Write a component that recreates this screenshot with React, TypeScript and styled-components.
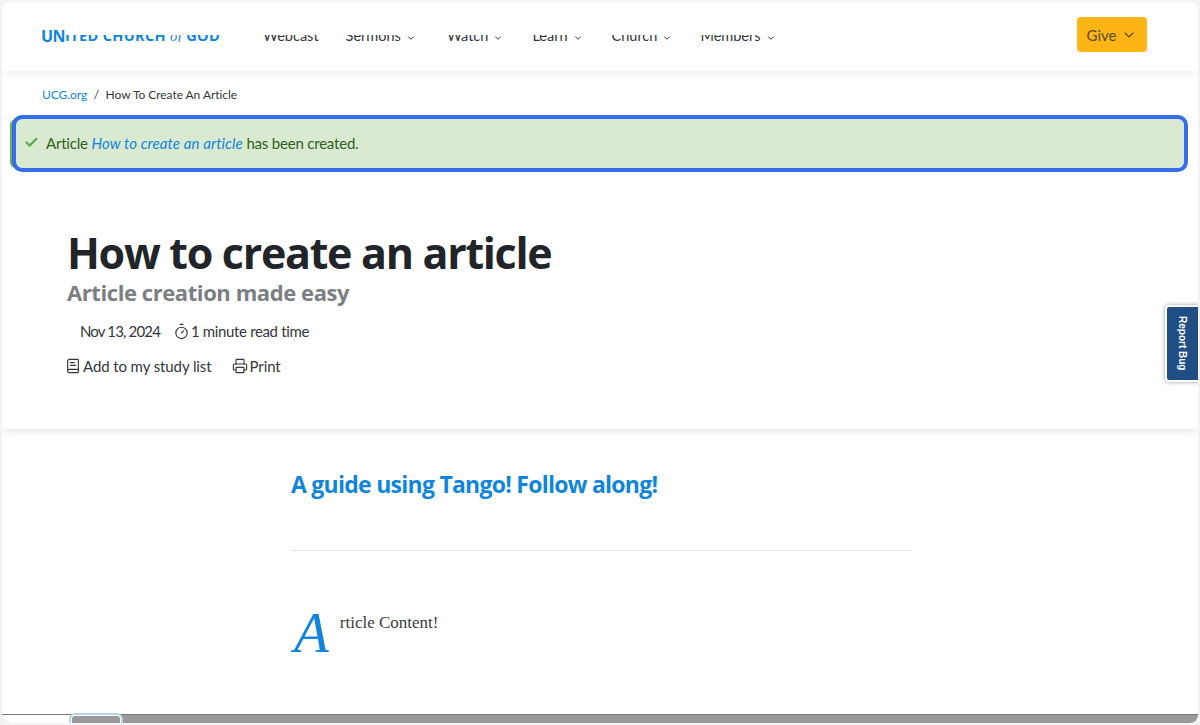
import React from 'react';
import styled, { createGlobalStyle } from 'styled-components';
import { Check, ChevronDown, Timer, BookText, Printer } from 'lucide-react';

const GlobalStyle = createGlobalStyle`
  html, body {
    margin: 0;
    padding: 0;
    height: 725px;
    overflow: hidden;
    background: #f2f2f7;
  }
  * { box-sizing: border-box; }
`;

const navItems = [
  { label: 'Webcast', gap: 27, arrow: false },
  { label: 'Sermons', gap: 31, arrow: true },
  { label: 'Watch', gap: 29, arrow: true },
  { label: 'Learn', gap: 29, arrow: true },
  { label: 'Church', gap: 28, arrow: true },
  { label: 'Members', gap: 0, arrow: true },
];

const App = () => {
  return (
    <>
      <GlobalStyle />
      <Frame>
        <Header>
          <Logo>
            <LogoHead>UN</LogoHead>
            <LogoClip>
              <LogoText>ITED CHURCH <em>of</em> GOD</LogoText>
            </LogoClip>
          </Logo>
          <Nav>
            {navItems.map((item) => (
              <NavItem key={item.label} $gap={item.gap}>
                <NavClip>
                  <NavText>{item.label}</NavText>
                </NavClip>
                {item.arrow && <NavArrow><ChevronDown size={10} strokeWidth={2.4} /></NavArrow>}
              </NavItem>
            ))}
          </Nav>
          <GiveButton>
            Give <ChevronDown size={16} strokeWidth={1.6} />
          </GiveButton>
        </Header>

        <Hero>
          <Breadcrumb>
            <BreadLink>UCG.org</BreadLink>
            <BreadSep>/</BreadSep>
            <span>How To Create An Article</span>
          </Breadcrumb>
          <AlertBar>
            <Check size={15} strokeWidth={3.5} color="#5cab4c" />
            <AlertText>
              Article <AlertLink>How to create an article</AlertLink> has been created.
            </AlertText>
          </AlertBar>
          <Title>How to create an article</Title>
          <Subtitle>Article creation made easy</Subtitle>
          <MetaRow>
            <DateText>Nov 13, 2024</DateText>
            <TimeGroup><Timer size={17} strokeWidth={1.6} /><ReadTime>1 minute read time</ReadTime></TimeGroup>
          </MetaRow>
          <ActionRow>
            <ActionItem><BookText size={16} strokeWidth={1.7} />Add to my study list</ActionItem>
            <ActionItem><Printer size={16} strokeWidth={1.7} />Print</ActionItem>
          </ActionRow>
        </Hero>

        <Content>
          <Column>
            <Heading>A guide using Tango! Follow along!</Heading>
            <Rule />
            <Body>
              <DropCap>A</DropCap>
              <BodyText>rticle Content!</BodyText>
            </Body>
          </Column>
        </Content>

        <BottomBar>
          <BottomBlank />
          <BottomTab />
        </BottomBar>

        <ReportBug>Report Bug</ReportBug>
      </Frame>
    </>
  );
};

export default App;

const Frame = styled.div`
  position: relative;
  margin: 2px;
  width: 1196px;
  height: 721px;
  background: #fff;
  border-radius: 8px;
  overflow: hidden;
  display: flex;
  flex-direction: column;
  font-family: Lato, "Liberation Sans", sans-serif;
  color: #212529;
`;

const Header = styled.header`
  position: relative;
  z-index: 2;
  flex: none;
  height: 69px;
  display: flex;
  padding: 0 51px 0 39px;
  background: #fff;
  box-shadow: 0 2px 10px rgba(0, 0, 0, 0.08);
`;

const Logo = styled.div`
  width: 222px;
  height: 40px;
  display: flex;
  align-items: flex-end;
  font-family: "Open Sans", sans-serif;
  font-weight: 700;
  font-size: 16px;
  line-height: 14px;
  letter-spacing: -0.5px;
  color: #1085dd;
`;

const LogoHead = styled.span`
  height: 14px;
  display: block;
  margin-bottom: -1px;
`;

const LogoClip = styled.div`
  height: 7px;
  overflow: hidden;
  display: flex;
  align-items: flex-end;
`;

const LogoText = styled.span`
  font-size: 14.5px;
  line-height: 14px;
  letter-spacing: 0.35px;
  white-space: nowrap;
  margin-bottom: -1px;
  em { font-family: "Liberation Serif", serif; font-weight: 400; }
`;

const Nav = styled.nav`
  height: 40px;
  display: flex;
  align-items: flex-end;
`;

const NavItem = styled.div<{ $gap: number }>`
  display: flex;
  align-items: flex-end;
  gap: 5px;
  margin-right: ${(p) => p.$gap}px;
`;

const NavClip = styled.div`
  height: 7px;
  overflow: hidden;
  display: flex;
  align-items: flex-end;
`;

const NavText = styled.span`
  font-size: 14.5px;
  line-height: 15px;
  color: #33373b;
  white-space: nowrap;
  margin-bottom: -1px;
`;

const NavArrow = styled.span`
  display: flex;
  height: 8px;
  align-items: center;
  color: #33373b;
`;

const GiveButton = styled.div`
  margin-left: auto;
  margin-top: 15px;
  width: 70px;
  height: 35px;
  background: #fdb515;
  border-radius: 4px;
  display: flex;
  align-items: center;
  justify-content: center;
  gap: 5px;
  font-size: 15px;
  color: #5a4c22;
`;

const Hero = styled.section`
  position: relative;
  z-index: 1;
  flex: none;
  height: 358px;
  padding-top: 15px;
  background: #fff;
  box-shadow: 0 2px 8px rgba(0, 0, 0, 0.1);
  display: flex;
  flex-direction: column;
`;

const Breadcrumb = styled.div`
  height: 16px;
  padding-left: 40px;
  display: flex;
  align-items: center;
  font-size: 12px;
  letter-spacing: -0.05px;
  color: #33373b;
`;

const BreadLink = styled.span`
  color: #1085dd;
`;

const BreadSep = styled.span`
  margin: 0 6.5px;
`;

const AlertBar = styled.div`
  margin: 17px 14px 0 14px;
  height: 49px;
  padding: 0 0 2px 8px;
  background: #d9ead0;
  border-radius: 6px;
  outline: 4px solid #346eec;
  outline-offset: 0;
  display: flex;
  align-items: center;
  gap: 7px;
  box-shadow: -6px 0 0 #6aad55;
`;

const AlertText = styled.span`
  font-size: 15px;
  letter-spacing: -0.2px;
  color: #2f5f22;
`;

const AlertLink = styled.em`
  letter-spacing: 0.1px;
  color: #1085dd;
`;

const Title = styled.h1`
  margin: 57px 0 0 65px;
  font-family: "Open Sans", sans-serif;
  font-weight: 700;
  font-size: 43px;
  line-height: 56px;
  letter-spacing: -1.3px;
  color: #212529;
`;

const Subtitle = styled.h2`
  margin: -2px 0 0 65px;
  font-family: "Open Sans", sans-serif;
  font-weight: 700;
  font-size: 22px;
  line-height: 26px;
  letter-spacing: -0.42px;
  color: #7b7e83;
`;

const MetaRow = styled.div`
  margin: 14px 0 0 78px;
  display: flex;
  align-items: center;
  gap: 13px;
  height: 24px;
  font-size: 15px;
  color: #33373b;
`;

const DateText = styled.span`
  letter-spacing: -0.85px;
`;

const TimeGroup = styled.span`
  display: flex;
  align-items: center;
  gap: 1px;
`;

const ReadTime = styled.span`
  letter-spacing: -0.35px;
`;

const ActionRow = styled.div`
  margin: 11px 0 0 63px;
  display: flex;
  align-items: center;
  gap: 20px;
  height: 24px;
  font-size: 15px;
  letter-spacing: -0.1px;
  color: #33373b;
`;

const ActionItem = styled.span`
  display: flex;
  align-items: center;
  gap: 2px;
`;

const Content = styled.main`
  flex: 1;
  display: flex;
  padding-left: 289px;
`;

const Column = styled.div`
  width: 621px;
  padding-top: 38px;
`;

const Heading = styled.h3`
  margin: 0;
  font-family: "Open Sans", sans-serif;
  font-weight: 700;
  font-size: 23px;
  line-height: 34px;
  letter-spacing: -0.74px;
  color: #1085dd;
`;

const Rule = styled.div`
  height: 1px;
  margin-top: 49px;
  background: #e2e3e5;
`;

const Body = styled.div`
  margin-top: 52px;
  display: flex;
  align-items: flex-start;
`;

const DropCap = styled.span`
  margin-left: 3px;
  font-family: "Liberation Serif", serif;
  font-style: italic;
  font-size: 57px;
  line-height: 60px;
  color: #1085dd;
`;

const BodyText = styled.span`
  margin-top: 8px;
  margin-left: 11px;
  font-family: "Liberation Serif", serif;
  font-size: 17px;
  line-height: 24px;
  color: #3a3d40;
`;

const BottomBar = styled.div`
  flex: none;
  height: 9px;
  background: #999;
  display: flex;
  box-shadow: inset 0 1px 0 #777;
`;

const BottomBlank = styled.div`
  width: 68px;
  margin-top: 1px;
  background: #fff;
`;

const BottomTab = styled.div`
  width: 52px;
  height: 11px;
  background: #999;
  border: 2px solid #fff;
  border-radius: 5px 5px 0 0;
  outline: 2px solid #b5d5ec;
  outline-offset: -1px;
`;

const ReportBug = styled.div`
  position: absolute;
  top: 303px;
  right: -2px;
  width: 35px;
  height: 77px;
  background: #1f4e85;
  border: 2px solid #fff;
  border-radius: 4px 0 0 4px;
  box-shadow: 0 0 4px rgba(0, 0, 0, 0.4);
  z-index: 3;
  display: flex;
  align-items: center;
  justify-content: center;
  writing-mode: vertical-rl;
  font-family: "Liberation Sans", sans-serif;
  font-weight: 700;
  font-size: 10px;
  color: #fff;
`;
